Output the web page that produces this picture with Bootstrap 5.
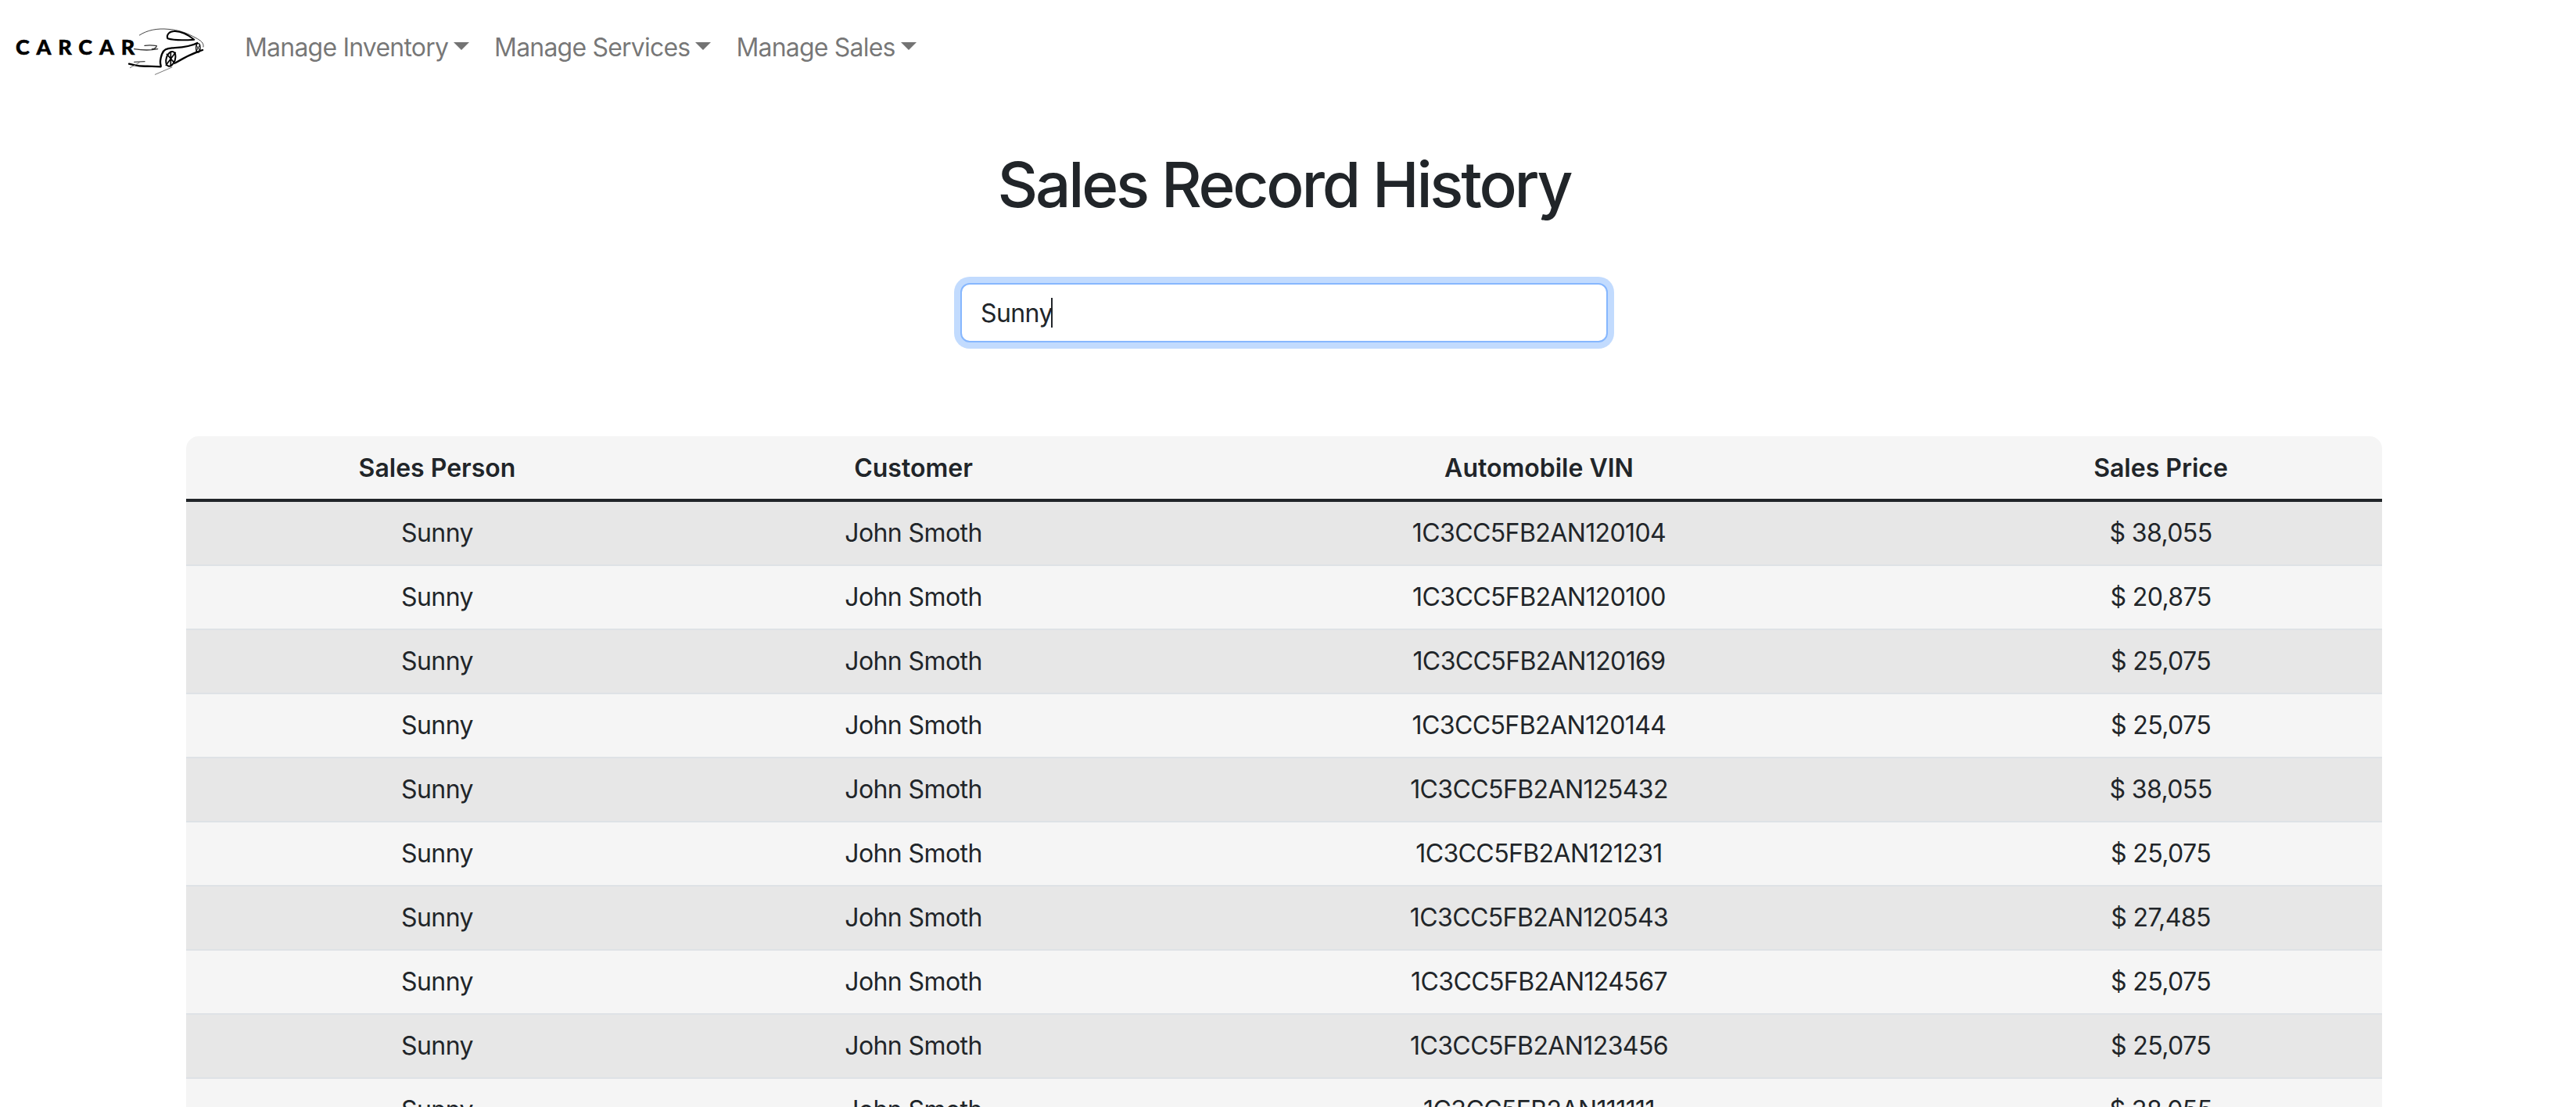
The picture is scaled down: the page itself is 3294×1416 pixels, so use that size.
<!DOCTYPE html>
<html lang="en">
  <head>
    <meta charset="UTF-8" />
    <title>CarCar</title>
    <link href="https://cdn.jsdelivr.net/npm/bootstrap@5.3.0/dist/css/bootstrap.min.css" rel="stylesheet" />
    <style>
      html { overflow: hidden; }
      body { font-family: Inter, "Liberation Sans", sans-serif; font-size: 32px; color: #212529; letter-spacing: -.6px; }
      .top-bar { padding: 36px 20px 0; height: 118px; align-items: flex-start; }
      .brand-logo { width: 245px; height: 64px; margin: 0 40px 0 0; padding: 0; }
      .brand-logo svg { display: block; overflow: visible; }
      .logo-word { font-family: Lato, sans-serif; font-weight: 900; font-size: 27px; letter-spacing: 8.8px; fill: #000; stroke: #000; stroke-width: .5px; }
      .top-bar .navbar-nav .nav-link { font-size: 32px; letter-spacing: -.8px; color: rgba(0, 0, 0, .55); padding: 0 8px; margin-right: 16px; line-height: 50px; }
      .top-bar .dropdown-toggle::after { border-top-width: 10px; border-left-width: 10px; border-right-width: 10px; margin-left: 7px; vertical-align: 8px; }
      .page-body { padding: 0 248px 0 238px; }
      .page-title { font-size: 80px; font-weight: 500; letter-spacing: -3.2px; line-height: 96px; margin: 0; padding-top: 70px; }
      .search-wrap { width: 828px; margin: 78px auto 0; }
      .search-wrap .form-control { font-size: 32px; letter-spacing: -.6px; height: 76px; padding: 12px 24px; border: 2px solid #86b7fe; border-radius: 12px; box-shadow: 0 0 0 8px rgba(13, 110, 253, .25); color: #212529; }
      .caret-line { position: absolute; left: 116px; top: 19px; width: 2px; height: 38px; background: #212529; }
      .sales-table { margin: 120px 0 0; font-size: 32px; background: #f5f5f5; border-radius: 16px 16px 0 0; table-layout: fixed; --bs-table-bg: transparent; --bs-table-striped-bg: #e7e7e7; }
      .sales-table th, .sales-table td { padding: 16px; line-height: 48px; text-align: center; border-bottom: 2px solid #dee2e6; }
      .sales-table thead th { font-weight: 600; letter-spacing: 0; border-bottom: 4px solid #212529; height: 82px; padding: 15px 16px; }
      .sales-table tbody td { height: 82px; }
      .col-person { width: 642px; }
      .col-customer { width: 576px; }
      .col-vin { width: 1024px; }
    </style>
  </head>
  <body>
    <nav class="navbar navbar-expand top-bar">
      <a class="navbar-brand brand-logo" href="#">
        <svg width="245" height="64" viewBox="0 0 245 64">
          <text class="logo-word" x="0" y="34">CARCAR</text>
          <g transform="translate(145 -6) scale(.3333)" fill="none" stroke="#000" stroke-linecap="round" stroke-linejoin="round">
            <path d="M40 45 C70 25 110 18 150 22 C190 24 225 38 255 55 C275 65 288 75 285 90" stroke-width="3" stroke="#444" />
            <path d="M148 58 C142 44 155 30 172 30 C195 28 225 42 250 62 C225 64 175 66 148 58 Z" stroke-width="6" />
            <path d="M20 98 C45 102 80 104 110 98 M60 85 C80 82 95 84 106 86 C104 94 96 98 88 98" stroke-width="4" stroke="#333" />
            <path d="M262 75 C230 92 195 92 165 94 C145 96 132 100 126 118 C120 135 118 150 122 162" stroke-width="7" />
            <ellipse cx="160" cy="136" rx="17" ry="29" transform="rotate(18 160 136)" stroke-width="6" />
            <path d="M145 118 L176 154 M178 112 L142 160 M160 108 L160 164" stroke-width="5" />
            <ellipse cx="265" cy="94" rx="8" ry="17" stroke-width="4" />
            <path d="M258 84 L272 104 M272 82 L258 106" stroke-width="3" />
            <path d="M180 150 C205 135 235 118 282 102" stroke-width="7" />
            <path d="M0 155 C25 160 40 166 70 164 L122 166" stroke-width="7" />
            <path d="M20 148 L60 146" stroke-width="4" stroke="#444" />
            <path d="M100 196 L165 168 M4 170 L40 150" stroke-width="3" stroke="#777" />
          </g>
        </svg>
      </a>
      <ul class="navbar-nav">
        <li class="nav-item dropdown"><a class="nav-link dropdown-toggle" href="#">Manage Inventory</a></li>
        <li class="nav-item dropdown"><a class="nav-link dropdown-toggle" href="#">Manage Services</a></li>
        <li class="nav-item dropdown"><a class="nav-link dropdown-toggle" href="#">Manage Sales</a></li>
      </ul>
    </nav>
    <main class="page-body">
      <h1 class="page-title text-center">Sales Record History</h1>
      <div class="search-wrap position-relative">
        <input class="form-control" type="text" value="Sunny" aria-label="Search" />
        <span class="caret-line"></span>
      </div>
      <table class="table table-striped sales-table">
        <thead>
          <tr>
            <th class="col-person">Sales Person</th>
            <th class="col-customer">Customer</th>
            <th class="col-vin">Automobile VIN</th>
            <th>Sales Price</th>
          </tr>
        </thead>
        <tbody id="salesRows"></tbody>
      </table>
    </main>
    <script>
      const sales = [
        ['1C3CC5FB2AN120104', '38,055'],
        ['1C3CC5FB2AN120100', '20,875'],
        ['1C3CC5FB2AN120169', '25,075'],
        ['1C3CC5FB2AN120144', '25,075'],
        ['1C3CC5FB2AN125432', '38,055'],
        ['1C3CC5FB2AN121231', '25,075'],
        ['1C3CC5FB2AN120543', '27,485'],
        ['1C3CC5FB2AN124567', '25,075'],
        ['1C3CC5FB2AN123456', '25,075'],
        ['1C3CC5FB2AN111111', '38,055']
      ]
      document.getElementById('salesRows').innerHTML = sales
        .map(([vin, price]) => `<tr><td>Sunny</td><td>John Smoth</td><td>${vin}</td><td>$ ${price}</td></tr>`)
        .join('')
    </script>
    <script src="https://cdn.jsdelivr.net/npm/bootstrap@5.3.0/dist/js/bootstrap.bundle.min.js"></script>
  </body>
</html>
